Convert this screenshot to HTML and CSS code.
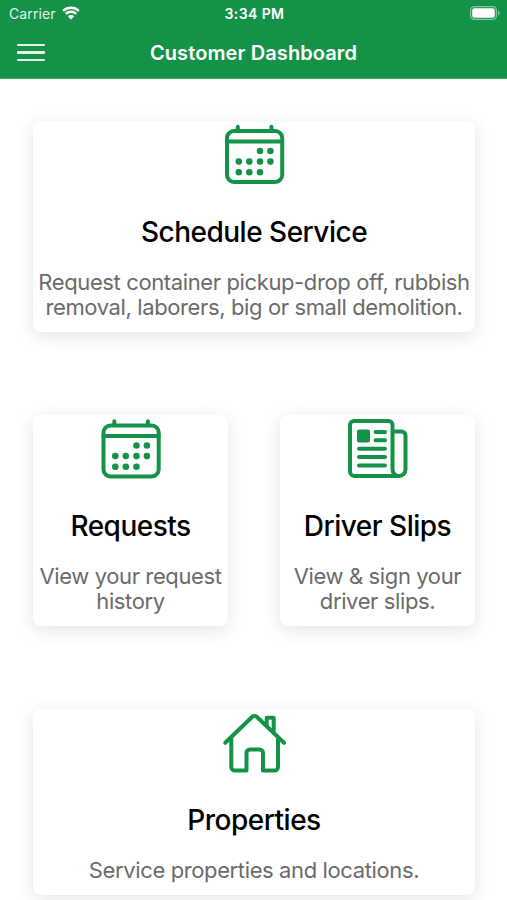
FILE: index.html
```
<!DOCTYPE html>
<html lang="en">
<head>
  <meta charset="UTF-8">
  <title>Customer Dashboard</title>
  <link rel="stylesheet" href="styles.css">
</head>
<body>
  <header class="header">
    <div class="status-bar">
      <div class="carrier">
        <span>Carrier</span>
        <svg class="wifi" viewBox="0 0 18 14">
          <path d="M1.2 4.9a11.2 11.2 0 0 1 15.6 0M3.8 7.9a7.4 7.4 0 0 1 10.4 0" />
          <path class="wifi-dot" d="M5.8 10.3a4.6 4.6 0 0 1 6.4 0L9 13.6z" />
        </svg>
      </div>
      <div class="time">3:34 PM</div>
      <svg class="battery" viewBox="0 0 30 14">
        <rect class="battery-case" x=".6" y=".6" width="25.8" height="12.8" rx="3.6" />
        <rect class="battery-level" x="2.2" y="2.2" width="22.6" height="9.6" rx="2" />
        <path class="battery-tip" d="M28 4.6q1.6.8 1.6 2.4T28 9.4z" />
      </svg>
    </div>
    <div class="nav-bar">
      <button class="menu" aria-label="Menu"><i></i><i></i><i></i></button>
      <h1>Customer Dashboard</h1>
    </div>
  </header>

  <main class="cards">
    <a class="card wide">
      <svg class="icon" viewBox="8 6 64 64">
        <rect x="13" y="16" width="55.2" height="51" rx="7" />
        <path d="M13 26.6h55.2M23.8 11.8v4M57.4 11.8v4" />
        <path class="dots" d="M46 36h0M56.4 36h0M24.8 46.6h0M35.3 46.6h0M46 46.6h0M56.4 46.6h0M24.8 57.2h0M35.3 57.2h0M46 57.2h0" />
      </svg>
      <h2>Schedule Service</h2>
      <p>Request container pickup-drop off, rubbish removal, laborers, big or small demolition.</p>
    </a>

    <a class="card">
      <svg class="icon" viewBox="8.5 5.500 64 64">
        <rect x="13" y="16" width="55.2" height="51" rx="7" />
        <path d="M13 26.6h55.2M23.8 11.8v4M57.4 11.8v4" />
        <path class="dots" d="M46 36h0M56.4 36h0M24.8 46.6h0M35.3 46.6h0M46 46.6h0M56.4 46.6h0M24.8 57.2h0M35.3 57.2h0M46 57.2h0" />
      </svg>
      <h2>Requests</h2>
      <p>View your request history</p>
    </a>

    <a class="card">
      <svg class="icon" viewBox="8 5 64 64">
        <path d="M61 66H16.5a4.5 4.5 0 0 1-4.5-4.5V15a4 4 0 0 1 4-4h34.5a4 4 0 0 1 4 4v44.5a6.5 6.5 0 0 0 13 0V25.5a4 4 0 0 0-4-4h-9" />
        <rect class="fill" x="19" y="19.5" width="13" height="13" rx="2" />
        <path d="M37.5 22h9.5M37.5 30.3h9.5M21 38.7h26M21 47h26M21 55.5h26" />
      </svg>
      <h2>Driver Slips</h2>
      <p>View &amp; sign your driver slips.</p>
    </a>

    <a class="card wide">
      <svg class="icon" viewBox="8 4 64 64">
        <path d="M11.3 37.8L38.3 11.8a3.2 3.2 0 0 1 4.4 0L70 37.8" />
        <path d="M52.7 20v-7.2h7V27" />
        <path d="M17.3 33.5V62a3.5 3.5 0 0 0 3.5 3.5h11.7V48a3.5 3.5 0 0 1 3.5-3.5h9.5a3.5 3.5 0 0 1 3.5 3.5v17.5h11.5a3.5 3.5 0 0 0 3.5-3.5V33.5" />
      </svg>
      <h2>Properties</h2>
      <p>Service properties and locations.</p>
    </a>
  </main>
</body>
</html>
```
FILE: styles.css
```
* { box-sizing: border-box; }
body { margin: 0; height: 900px; overflow: hidden; background: #fff; font-family: Inter, "Liberation Sans", sans-serif; }
h1, h2, p { margin: 0; }

.header { height: 79px; background: #149348; border-bottom: 1px solid #4bab72; color: #fff; }
.status-bar { display: grid; grid-template-columns: 1fr auto 1fr; align-items: center; height: 27px; padding: 0 7px 0 9px; font-size: 14px; }
.carrier { display: flex; align-items: center; gap: 6px; color: #e0f2e7; letter-spacing: .1px; }
.wifi { width: 18px; height: 14px; margin-top: -2px; fill: none; stroke: #fff; stroke-width: 2.3; }
.wifi-dot { fill: #fff; stroke: none; }
.time { font-size: 14px; font-weight: 600; letter-spacing: .4px; }
.battery { width: 30px; height: 14px; margin-top: -1px; justify-self: end; }
.battery-case { fill: none; stroke: #83c79e; stroke-width: 1.2; }
.battery-level { fill: #fff; }
.battery-tip { fill: #83c79e; }

.nav-bar { display: grid; grid-template-columns: 1fr auto 1fr; align-items: center; height: 51px; padding: 0 17px; }
.menu { display: flex; flex-direction: column; gap: 5px; width: 28px; padding: 0; border: 0; background: none; }
.menu i { width: 28px; height: 2.3px; border-radius: 1px; background: #e3f5ea; }
.nav-bar h1 { font-size: 20px; font-weight: 600; letter-spacing: .1px; }

.cards { display: grid; grid-template-columns: 1fr 1fr; gap: 83px 52px; padding: 42px 32px 0 33px; }
.card { display: flex; flex-direction: column; align-items: center; padding-bottom: 11.5px; border-radius: 8px; background: #fff; box-shadow: 0 4px 18px rgba(0, 0, 0, .11); text-align: center; }
.wide { grid-column: span 2; }
.card h2 { margin: 29.5px 0 21px; font-size: 28px; font-weight: 500; line-height: 34px; letter-spacing: -.5px; color: #000; }
.card p { padding: 0 4px; font-size: 22px; line-height: 25.5px; letter-spacing: -.38px; color: #6b6b6b; }

.icon { width: 64px; height: 64px; fill: none; stroke: #149348; stroke-width: 4; stroke-linecap: round; stroke-linejoin: round; }
.icon .dots { stroke-width: 6.6; }
.icon .fill { fill: #149348; stroke: none; }
```
